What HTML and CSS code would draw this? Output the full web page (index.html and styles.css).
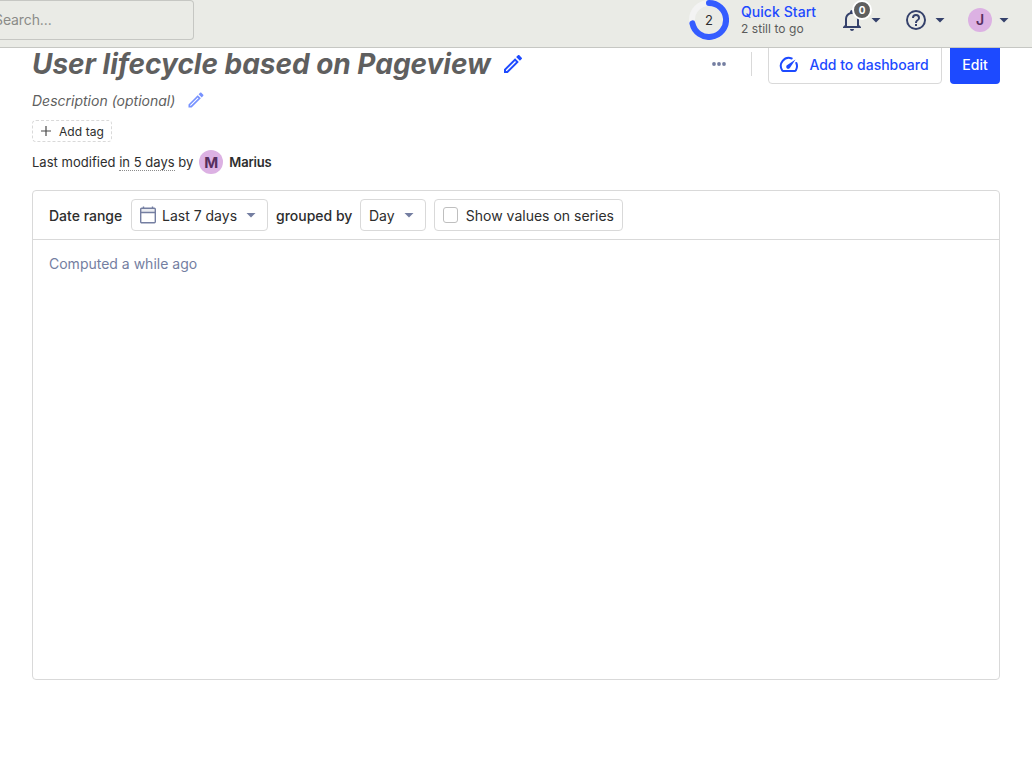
FILE: index.html
```html
<!DOCTYPE html>
<html lang="en">
<head>
<meta charset="utf-8">
<title>User lifecycle based on Pageview</title>
<link rel="stylesheet" href="styles.css">
</head>
<body>
<header class="topbar">
  <div class="search"><span class="search-text">Search...</span></div>
  <div class="topbar-right">
    <div class="quickstart">
      <svg class="ring" viewBox="0 0 40 40" width="40" height="40">
        <circle cx="20" cy="20" r="17" fill="none" stroke="#f3f3f3" stroke-width="6"/>
        <path d="M20 3A17 17 0 1 1 3.4 23.4" fill="none" stroke="#345cff" stroke-width="6" stroke-linecap="round"/>
        <text class="ring-text" x="20" y="25" text-anchor="middle">2</text>
      </svg>
      <div class="quickstart-text">
        <span class="quickstart-title">Quick Start</span>
        <span class="quickstart-sub">2 still to go</span>
      </div>
    </div>
    <div class="menu bell">
      <svg viewBox="0 0 24 24" width="24" height="24"><path fill="#35416b" d="M10 21h4c0 1.100-.9 2-2 2s-2-.9-2-2zm11-2v1H3v-1l2-2v-6c0-3.100 2-5.830 5-6.710V4a2 2 0 0 1 4 0v.29c3 .88 5 3.610 5 6.710v6l2 2zm-4-8a5 5 0 0 0-10 0v7h10v-7z"/></svg>
      <span class="count">0</span>
      <i class="caret"></i>
    </div>
    <div class="menu help">
      <svg viewBox="0 0 24 24" width="24" height="24"><path fill="#35416b" d="M11 18h2v-2h-2v2zm1-16a10 10 0 1 0 0 20 10 10 0 0 0 0-20zm0 18c-4.410 0-8-3.590-8-8s3.590-8 8-8 8 3.590 8 8-3.590 8-8 8zm0-14a4 4 0 0 0-4 4h2c0-1.100.9-2 2-2s2 .9 2 2c0 2-3 1.750-3 5h2c0-2.250 3-2.500 3-5a4 4 0 0 0-4-4z"/></svg>
      <i class="caret"></i>
    </div>
    <div class="menu user">
      <span class="avatar">J</span>
      <i class="caret"></i>
    </div>
  </div>
</header>
<main class="page">
  <div class="title-row">
    <h1 class="title">User lifecycle based on Pageview</h1>
    <svg class="pencil" viewBox="0 0 24 24" width="24" height="24"><path fill="#1d4aff" d="M14.060 9l.94.940L5.920 19H5v-.92L14.060 9m3.600-6c-.25 0-.51.100-.7.290l-1.830 1.830 3.750 3.750 1.830-1.830c.39-.39.390-1.040 0-1.410l-2.340-2.340c-.2-.2-.45-.29-.71-.29m-3.600 3.190L3 17.250V21h3.750L17.810 9.940l-3.750-3.750z"/></svg>
    <div class="actions">
      <svg class="more" viewBox="0 0 16 4" width="16" height="4"><g fill="#747ea1"><circle cx="3" cy="2" r="1.900"/><circle cx="8" cy="2" r="1.900"/><circle cx="13" cy="2" r="1.900"/></g></svg>
      <span class="divider"></span>
      <button class="btn btn-outline">
        <svg viewBox="0 0 20 18" width="20" height="18"><g fill="none" stroke="#1d4aff" stroke-width="2" stroke-linecap="round" stroke-linejoin="round"><path d="M12.700 2.450A8 8 0 0 0 3.100 14.200Q3.500 15 4.400 15h11.200q.9 0 1.300-.8A8 8 0 0 0 17.300 7"/></g><path fill="#1d4aff" d="M16.500 3.500l-8.200 5.600a2 2 0 1 0 2.700 2.700z"/></svg>
        <span>Add to dashboard</span>
      </button>
      <button class="btn btn-primary">Edit</button>
    </div>
  </div>
  <div class="description">
    <span class="description-text">Description (optional)</span>
    <svg class="pencil-light" viewBox="0 0 24 24" width="20" height="20"><path fill="#1d4aff" d="M14.060 9l.94.940L5.920 19H5v-.92L14.060 9m3.600-6c-.25 0-.51.100-.7.290l-1.830 1.830 3.750 3.750 1.830-1.830c.39-.39.390-1.040 0-1.410l-2.340-2.340c-.2-.2-.45-.29-.71-.29m-3.600 3.190L3 17.250V21h3.750L17.810 9.940l-3.750-3.750z"/></svg>
  </div>
  <div class="tag">
    <svg viewBox="0 0 10 10" width="10" height="10"><path d="M5 0v10M0 5h10" stroke="#4a4a4a" stroke-width="1.200"/></svg>
    <span>Add tag</span>
  </div>
  <div class="modified">
    <span class="modified-text">Last modified <span class="when">in 5 days</span> by</span>
    <span class="avatar avatar-m">M</span>
    <span class="name">Marius</span>
  </div>
  <section class="card">
    <div class="filters">
      <span class="label date-label">Date range</span>
      <button class="select date">
        <svg viewBox="0 0 16 18" width="16" height="18"><path fill="#747ea1" fill-opacity=".15" d="M1 3h14v3H1z"/><rect x=".7" y="2.200" width="14.600" height="14.600" rx="1" fill="none" stroke="#747ea1" stroke-width="1.400"/><path fill="none" stroke="#747ea1" stroke-width="1.400" d="M.7 6.500h14.600M3.500 .5v2M12.500 .5v2"/></svg>
        <span class="control-text">Last 7 days</span>
        <i class="caret caret-muted"></i>
      </button>
      <span class="label group-label">grouped by</span>
      <button class="select day">
        <span class="control-text">Day</span>
        <i class="caret caret-muted"></i>
      </button>
      <label class="select series"><span class="box"></span><span class="control-text">Show values on series</span></label>
    </div>
    <div class="computed">Computed a while ago</div>
  </section>
</main>
</body>
</html>
```
FILE: styles.css
```css
* { box-sizing: border-box; }
body { margin: 0; background: #fff; color: #2d2d2d; font: 14px/20px Inter, sans-serif; overflow: hidden; }
svg { display: block; flex: none; }
button { font: inherit; color: inherit; margin: 0; }

.topbar { position: relative; z-index: 2; height: 48px; display: flex; justify-content: space-between; background: #eaebe6; border-bottom: 1px solid #c6c7c3; }
.search { width: 194px; height: 40px; border: 1px solid #c6c7c3; border-left: 0; border-radius: 0 4px 4px 0; overflow: hidden; display: flex; align-items: center; color: #8b8b88; }
.search-text { margin-left: -6px; letter-spacing: -.1px; }
.topbar-right { display: flex; height: 40px; align-items: center; padding-right: 23px; }
.quickstart { display: flex; align-items: center; width: 151px; gap: 12px; }
.ring-text { font-size: 13px; fill: #2d2d2d; }
.quickstart-text { display: flex; flex-direction: column; white-space: nowrap; }
.quickstart-title { color: #1d4aff; font-weight: 500; line-height: 18px; margin-top: -1px; letter-spacing: .05px; }
.quickstart-sub { color: #5b5b5b; font-size: 12px; line-height: 16px; letter-spacing: .05px; }
.menu { position: relative; display: flex; align-items: center; gap: 7px; }
.bell { width: 64px; }
.help { width: 64px; }
.caret { width: 10px; height: 5px; background: #35416b; clip-path: polygon(0 0, 100% 0, 50% 100%); }
.count { position: absolute; left: 12px; top: -8px; width: 20px; height: 20px; border: 2px solid #fff; border-radius: 50%; background: #5f5f5f; color: #fff; font-size: 10px; font-weight: 700; line-height: 16px; text-align: center; }
.avatar { flex: none; width: 24px; height: 24px; border-radius: 50%; background: #dcb1e3; color: #572e5e; font-size: 14px; font-weight: 600; line-height: 24px; text-align: center; }
.avatar-m { font-size: 15px; font-weight: 700; line-height: 25px; }

.page { margin-top: -4px; padding: 0 32px; }
.title-row { display: flex; align-items: center; height: 40px; }
.title { margin: 0; color: #5f5f5f; font-size: 28px; line-height: 40px; font-weight: 700; font-style: italic; white-space: nowrap; letter-spacing: -.02px; }
.pencil { margin-left: 10px; }
.actions { margin-left: auto; display: flex; align-items: center; }
.divider { width: 1px; height: 24px; margin: 0 16px 0 24px; background: #d9d9d9; }
.btn { height: 40px; border-radius: 4px; padding: 2px 0 0; display: flex; align-items: center; justify-content: center; font-weight: 500; white-space: nowrap; }
.btn-outline { width: 174px; gap: 10px; padding-right: 2px; border: 1px solid #d9d9d9; background: #fff; color: #1d4aff; }
.btn-primary { width: 50px; margin-left: 8px; border: 0; background: #1d4aff; color: #fff; }
.description { display: flex; align-items: center; height: 20px; margin-top: 6px; gap: 11px; color: #5f5f5f; font-style: italic; }
.description-text { padding-top: 2px; }
.pencil-light { opacity: .6; }
.tag { display: flex; align-items: center; width: 80px; height: 22px; margin-top: 10px; padding: 1px 0 0 8px; gap: 8px; border: 1px dashed #d9d9d9; border-radius: 4px; font-size: 12px; letter-spacing: .08px; }
.tag svg { margin-top: -1px; }
.modified { display: flex; align-items: center; height: 24px; margin-top: 8px; gap: 6px; font-size: 13px; }
.modified-text { letter-spacing: .02px; }
.when { border-bottom: 1px dotted #8c8c8c; }
.name { font-weight: 600; letter-spacing: -.2px; }
.card { height: 490px; margin-top: 16px; border: 1px solid #d9d9d9; border-radius: 4px; }
.filters { display: flex; align-items: center; gap: 8px; height: 49px; padding-left: 16px; border-bottom: 1px solid #d9d9d9; white-space: nowrap; }
.label { font-weight: 500; padding-top: 2px; }
.date-label { width: 74px; }
.group-label { width: 76px; }
.control-text { padding-top: 2px; }
.select { display: flex; align-items: center; height: 32px; padding: 0 8px; border: 1px solid #d9d9d9; border-radius: 4px; background: #fff; }
.caret-muted { background: #747ea1; margin-left: auto; margin-right: 3px; }
.date { width: 137px; gap: 6px; }
.day { width: 66px; }
.series { width: 189px; gap: 8px; }
.box { width: 16px; height: 16px; border: 1px solid #bfbfbf; border-radius: 3px; }
.computed { padding: 14px 16px; color: #747ea1; }
```
